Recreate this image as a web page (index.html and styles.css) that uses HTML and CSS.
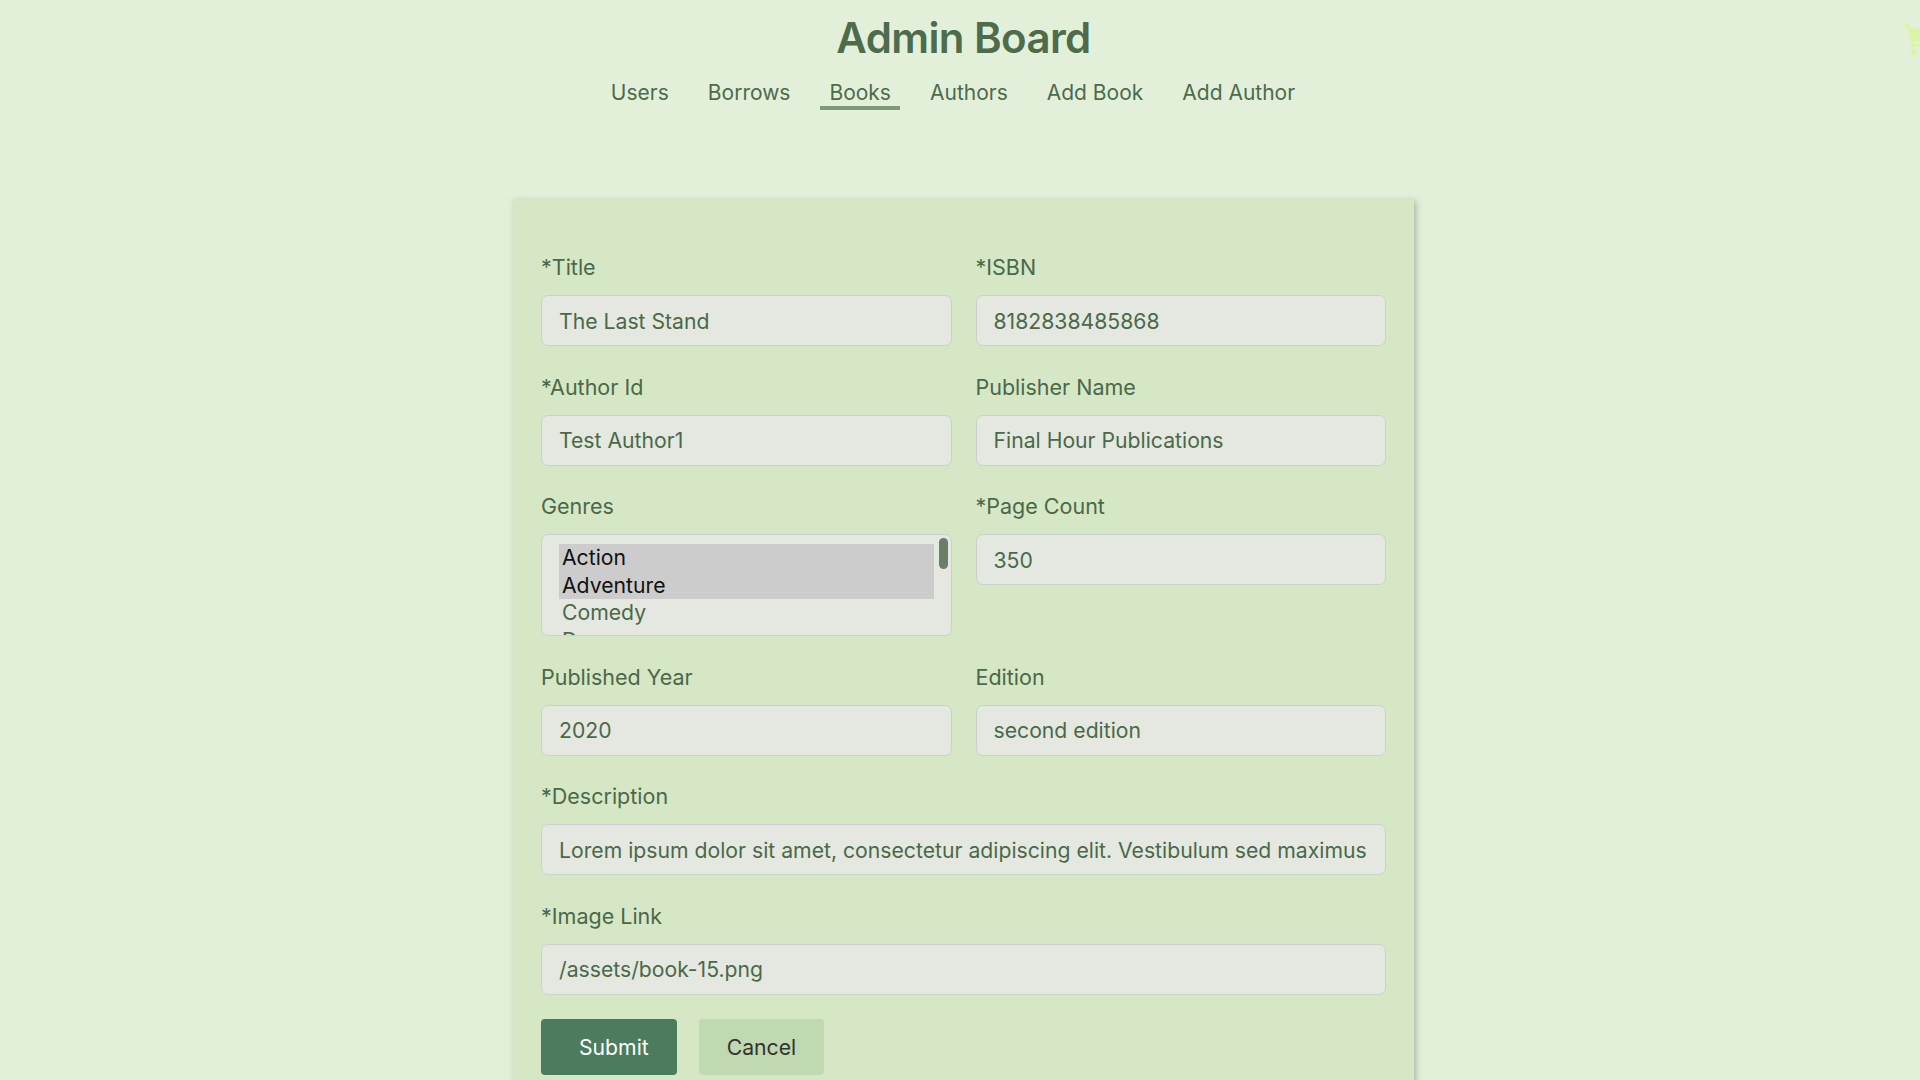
FILE: index.html
```html
<!DOCTYPE html>
<html lang="en">
<head>
<meta charset="utf-8">
<title>Admin Board</title>
<link rel="stylesheet" href="styles.css">
</head>
<body>
<svg class="cart" viewBox="0 0 28 32" width="28" height="32" aria-hidden="true">
  <path d="M0 0h5.5l1.3 4.5H28l-3.2 12.5H9.6l0.8 3H26v3H8.2L3.4 3H0z"/>
  <circle cx="10" cy="28.5" r="3"/>
  <circle cx="23" cy="28.5" r="3"/>
</svg>
<header class="header">
  <h1 class="title">Admin Board</h1>
  <nav class="nav">
    <a class="nav-link" href="#">Users</a>
    <a class="nav-link" href="#">Borrows</a>
    <a class="nav-link active" href="#">Books</a>
    <a class="nav-link" href="#">Authors</a>
    <a class="nav-link" href="#">Add Book</a>
    <a class="nav-link" href="#">Add Author</a>
  </nav>
</header>
<main class="card">
  <form class="form">
    <div class="field">
      <label class="label">*Title</label>
      <input class="input" type="text" value="The Last Stand">
    </div>
    <div class="field">
      <label class="label">*ISBN</label>
      <input class="input" type="text" value="8182838485868">
    </div>
    <div class="field">
      <label class="label">*Author Id</label>
      <input class="input" type="text" value="Test Author1">
    </div>
    <div class="field">
      <label class="label">Publisher Name</label>
      <input class="input" type="text" value="Final Hour Publications">
    </div>
    <div class="field">
      <label class="label">Genres</label>
      <div class="listbox">
        <div class="option selected">Action</div>
        <div class="option selected">Adventure</div>
        <div class="option">Comedy</div>
        <div class="option">Drama</div>
        <div class="thumb"></div>
      </div>
    </div>
    <div class="field">
      <label class="label">*Page Count</label>
      <input class="input" type="text" value="350">
    </div>
    <div class="field">
      <label class="label">Published Year</label>
      <input class="input" type="text" value="2020">
    </div>
    <div class="field">
      <label class="label">Edition</label>
      <input class="input" type="text" value="second edition">
    </div>
    <div class="field wide">
      <label class="label">*Description</label>
      <input class="input" type="text" value="Lorem ipsum dolor sit amet, consectetur adipiscing elit. Vestibulum sed maximus lorem, vitae fermentum nunc.">
    </div>
    <div class="field wide">
      <label class="label">*Image Link</label>
      <input class="input" type="text" value="/assets/book-15.png">
    </div>
    <div class="actions wide">
      <button class="btn btn-submit" type="button">Submit</button>
      <button class="btn btn-cancel" type="button">Cancel</button>
    </div>
  </form>
</main>
</body>
</html>
```
FILE: styles.css
```css
html, body {
  margin: 0;
  padding: 0;
}
body {
  background: #e2f0da;
  font-family: Inter, "Noto Sans", sans-serif;
  color: #4b6849;
  overflow: hidden;
  height: 1080px;
  position: relative;
  padding-left: 7px;
}
.cart {
  position: absolute;
  top: 24px;
  left: 1904px;
  fill: #daf5a6;
}
.header {
  display: flex;
  flex-direction: column;
  align-items: center;
}
.title {
  margin: 12px 0 0;
  font-size: 42px;
  line-height: 52px;
  font-weight: 600;
  color: #4e6b4c;
  letter-spacing: -0.6px;
}
.nav {
  display: flex;
  margin-top: 17px;
}
.nav-link {
  font-size: 21px;
  line-height: 24px;
  padding: 0 9px 1px;
  margin-right: 21px;
  color: #4e6a4c;
  text-decoration: none;
  border-bottom: 4px solid transparent;
}
.nav-link.active {
  border-bottom-color: #7d9a7b;
}
.card {
  box-sizing: border-box;
  width: 901px;
  margin: 89px auto 0;
  background: #d5e7c5;
  padding: 56px 28px 40px;
  box-shadow: 2px 2px 6px rgba(60, 80, 60, 0.35);
}
.form {
  display: grid;
  grid-template-columns: 1fr 1fr;
  column-gap: 24px;
  row-gap: 28.6px;
}
.field {
  display: flex;
  flex-direction: column;
}
.wide {
  grid-column: 1 / -1;
}
.label {
  font-size: 21.5px;
  line-height: 24px;
  margin-bottom: 16px;
  color: #4b6849;
}
.input {
  box-sizing: border-box;
  height: 51px;
  width: 100%;
  padding: 0 17px;
  border: 1px solid #c7d3cc;
  border-radius: 7px;
  background: #e4e8e0;
  font-family: inherit;
  font-size: 21.2px;
  color: #4b6849;
  outline: none;
}
.listbox {
  position: relative;
  box-sizing: border-box;
  height: 102px;
  padding: 9px 17px 0 17px;
  border: 1px solid #c7d3cc;
  border-radius: 7px;
  background: #e4e8e0;
  overflow: hidden;
}
.option {
  height: 27.5px;
  line-height: 27.5px;
  padding-left: 3px;
  font-size: 21.2px;
  color: #4b6849;
}
.option.selected {
  background: #cccccc;
  color: #111111;
}
.thumb {
  position: absolute;
  top: 3px;
  right: 3px;
  width: 9px;
  height: 31px;
  border-radius: 5px;
  background: #6a7e69;
}
.actions {
  display: flex;
  gap: 22px;
  margin-top: -5px;
}
.btn {
  height: 56px;
  border: none;
  border-radius: 4px;
  font-family: inherit;
  font-size: 21.2px;
  cursor: pointer;
}
.btn-submit {
  background: #4c7b5e;
  color: #ffffff;
  padding: 0 28px 0 38px;
}
.btn-cancel {
  background: #c0d9b0;
  color: #333333;
  padding: 0 28px;
}
```
